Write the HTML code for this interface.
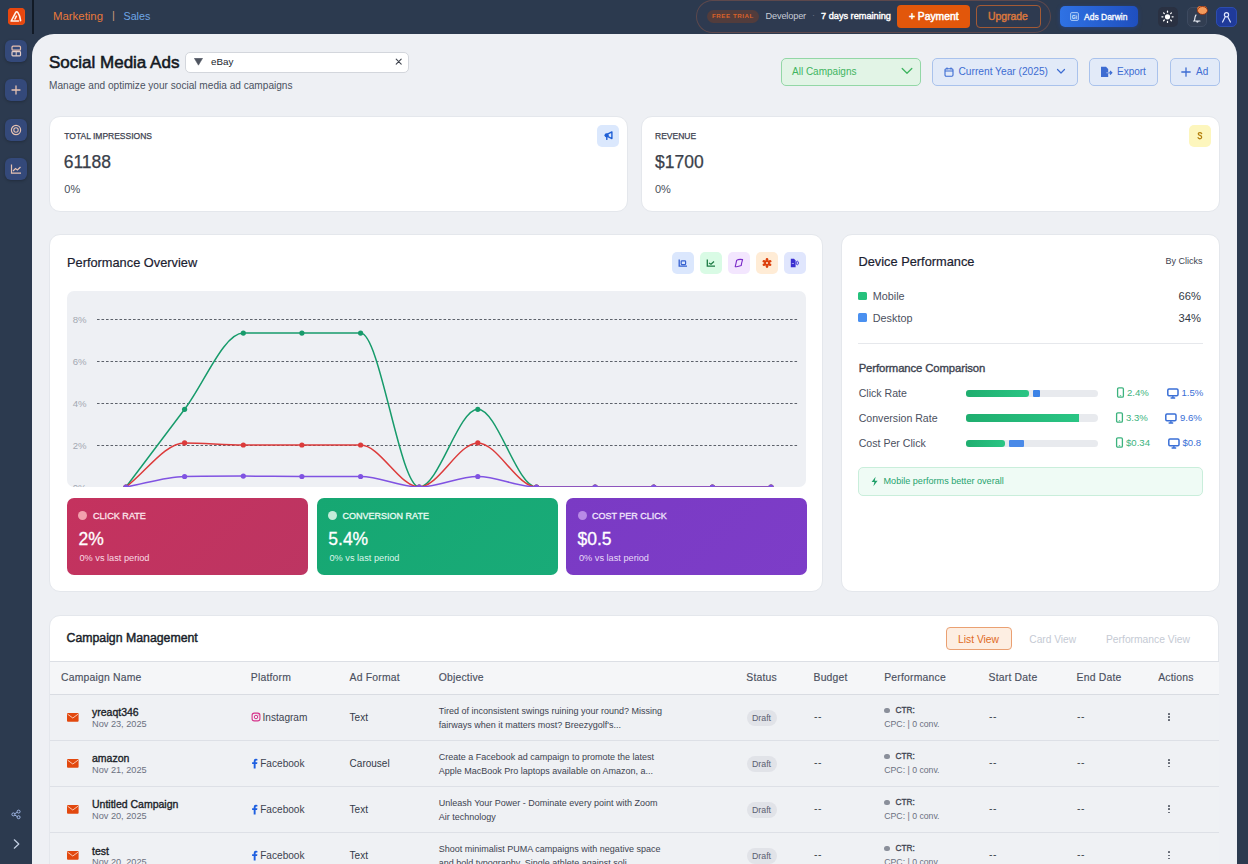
<!DOCTYPE html>
<html><head><meta charset="utf-8">
<style>
*{box-sizing:border-box;margin:0;padding:0}
html,body{width:1248px;height:864px;overflow:hidden}
body{background:#2c3a4f;font-family:"Liberation Sans",sans-serif;position:relative;color:#3d4350}
.a{position:absolute;white-space:nowrap}
.b{font-weight:700}
svg{display:block}
#main{position:absolute;left:32px;top:34px;width:1205px;height:900px;background:#eef0f4;border-radius:22px 22px 0 0}
.card{position:absolute;background:#fff;border:1px solid #e4e7ec;border-radius:11px}
.sbtn{position:absolute;left:5px;width:22px;height:22px;border-radius:6px;background:#34497a;box-shadow:0 1px 3px rgba(0,0,0,.25)}
.ib{position:absolute;width:22px;height:22px;border-radius:5px}
.tb{position:absolute;top:58px;height:27.5px;border-radius:5px;border:1px solid #a9c2ec;background:#e2eaf8;color:#3d6cd2;font-size:10px}
.mc{position:absolute;top:498px;height:77px;border-radius:7px;color:#fff}
.row{position:absolute;left:0;width:1170px;height:46.3px;border-top:1px solid #dfe2e8}
</style></head>
<body>
<!-- top header -->
<div class="a" style="left:32px;top:0;width:2px;height:34px;background:#121a26"></div>
<div class="a" style="left:8px;top:8px;width:17px;height:17px;border-radius:4px;background:#ea5a1c"></div>
<div class="a" style="left:53px;top:10.3px;font-size:11.4px;color:#e8793a">Marketing</div>
<div class="a" style="left:112px;top:9px;font-size:11px;color:#c79a78">|</div>
<div class="a" style="left:123.5px;top:10.3px;font-size:10.7px;color:#6fa6e6">Sales</div>

<!-- trial pill -->
<div class="a" style="left:696px;top:0px;width:355px;height:33px;border-radius:17px;border:1px solid rgba(214,110,70,0.28);background:#2e3a50"></div>
<div class="a" style="left:707px;top:10px;width:52px;height:12.5px;border-radius:7px;background:#523c3c"></div>
<div class="a b" style="left:712px;top:12.3px;font-size:6.2px;letter-spacing:0.55px;color:#d9622a">FREE TRIAL</div>
<div class="a" style="left:765.5px;top:11.2px;font-size:9.2px;color:#c7ccd6;letter-spacing:-0.15px">Developer</div>
<div class="a" style="left:812px;top:10px;font-size:9px;color:#6b7385">·</div>
<div class="a" style="left:821px;top:11.2px;font-size:9.2px;color:#fff;-webkit-text-stroke:0.4px #fff">7 days remaining</div>
<div class="a" style="left:897px;top:5px;width:73px;height:23px;border-radius:4px;background:#e2570b"></div>
<div class="a" style="left:909px;top:11.2px;font-size:10.3px;color:#fff;-webkit-text-stroke:0.5px #fff">+ Payment</div>
<div class="a" style="left:976px;top:5px;width:65px;height:23px;border-radius:4px;border:1.5px solid #a35a35"></div>
<div class="a" style="left:988px;top:11.2px;font-size:10.4px;color:#d9773d;-webkit-text-stroke:0.45px #d9773d">Upgrade</div>

<div class="a" style="left:1060px;top:6px;width:77.5px;height:21px;border-radius:5px;background:linear-gradient(90deg,#2f72e4,#1f4fbf);box-shadow:0 1px 4px rgba(30,80,200,.4)"></div>
<div class="a" style="left:1070px;top:11.5px;width:9px;height:9px;border-radius:2px;border:1px solid #9ec0f5;background:#3f7de0"></div>
<div class="a" style="left:1084px;top:11.5px;font-size:8.5px;color:#fff;-webkit-text-stroke:0.3px #fff">Ads Darwin</div>

<div class="a" style="left:1157.5px;top:6.5px;width:20px;height:20px;border-radius:5px;background:#2a3142"></div>
<div class="a" style="left:1186.5px;top:6.5px;width:20.5px;height:20px;border-radius:5px;background:#323e52;border:1px solid #3d4a60"></div>
<div class="a" style="left:1197px;top:6px;width:10px;height:7px;border-radius:4px;background:#f0823a"></div>
<div class="a" style="left:1216px;top:6.5px;width:21px;height:20.5px;border-radius:5px;background:#1f3a9a;border:1px solid #2d4db0"></div>

<!-- sidebar buttons -->
<div class="sbtn" style="top:40px"></div>
<div class="sbtn" style="top:79px"></div>
<div class="sbtn" style="top:118.5px"></div>
<div class="sbtn" style="top:158px"></div>


<!-- sidebar bottom -->
<svg class="a" style="left:10px;top:808px" width="12" height="12" viewBox="0 0 12 12"><g fill="none" stroke="#a9c1f0" stroke-width="0.9"><circle cx="3.4" cy="6.4" r="1.5"/><circle cx="8.6" cy="3.6" r="1.5"/><circle cx="8.6" cy="9.2" r="1.5"/><path d="M4.8,5.7 L7.2,4.3 M4.8,7.1 L7.2,8.5"/></g></svg>
<svg class="a" style="left:12px;top:838px" width="9" height="12" viewBox="0 0 9 12"><path d="M2.3,1.8 L6.8,6 L2.3,10.2" fill="none" stroke="#c4d0e4" stroke-width="1.2" stroke-linecap="round" stroke-linejoin="round"/></svg>

<!-- main panel -->
<div id="main"></div>

<div class="a" style="left:49px;top:53.3px;font-size:17px;-webkit-text-stroke:0.55px #14181f;color:#14181f">Social Media Ads</div>
<div class="a" style="left:184.8px;top:51.5px;width:224.6px;height:21px;border-radius:5px;border:1px solid #d3d6dc;background:#fff"></div>
<div class="a" style="left:211px;top:55.9px;font-size:9.8px;color:#20242c">eBay</div>
<div class="a" style="left:49px;top:80.3px;font-size:10.1px;color:#4b5261">Manage and optimize your social media ad campaigns</div>

<!-- toolbar -->
<div class="tb" style="left:780.5px;width:140px;background:#e2f4e6;border-color:#93d7a6;color:#3fb460"></div>
<div class="a" style="left:792px;top:66.4px;font-size:10px;color:#3fb460">All Campaigns</div>
<div class="tb" style="left:932px;width:145.5px"></div>
<div class="a" style="left:958.5px;top:66.4px;font-size:10.2px;color:#3d6cd2">Current Year (2025)</div>
<div class="tb" style="left:1089px;width:69px"></div>
<div class="a" style="left:1117px;top:66.4px;font-size:10px;color:#3d6cd2">Export</div>
<div class="tb" style="left:1169.5px;width:50.5px"></div>
<div class="a" style="left:1196px;top:66.4px;font-size:10px;color:#3d6cd2">Ad</div>

<!-- stat cards -->
<div class="card" style="left:49px;top:115.5px;width:579px;height:96px"></div>
<div class="a" style="left:64.3px;top:131.2px;font-size:8.5px;color:#3e4350;-webkit-text-stroke:0.25px #3e4350">TOTAL IMPRESSIONS</div>
<div class="a" style="left:63.7px;top:152px;font-size:17.5px;color:#3a3f4a;-webkit-text-stroke:0.25px #3a3f4a">61188</div>
<div class="ib" style="left:597.3px;top:124.7px;background:#dbe8fd"></div>
<div class="a" style="left:64.3px;top:183.2px;font-size:11px;color:#4a4f5a">0%</div>

<div class="card" style="left:641px;top:115.5px;width:579px;height:96px"></div>
<div class="a" style="left:655px;top:131.2px;font-size:8.5px;color:#3e4350;-webkit-text-stroke:0.25px #3e4350">REVENUE</div>
<div class="a" style="left:655px;top:152px;font-size:17.5px;color:#3a3f4a;-webkit-text-stroke:0.25px #3a3f4a">$1700</div>
<div class="ib" style="left:1188.5px;top:124.5px;background:#fdf6bd"></div>
<div class="a" style="left:655px;top:183.2px;font-size:11px;color:#4a4f5a">0%</div>

<!-- performance overview -->
<div class="card" style="left:49px;top:234px;width:774px;height:358px"></div>
<div class="a" style="left:67px;top:254.5px;font-size:12.8px;color:#1b2130;-webkit-text-stroke:0.2px #1b2130">Performance Overview</div>


<!-- chart -->
<div class="a" style="left:67px;top:291px;width:739px;height:196px;border-radius:7px;background:#eef0f4;overflow:hidden">
<svg width="739" height="210" style="position:absolute;left:0;top:0">
<line x1="30" y1="28.5" x2="731" y2="28.5" stroke="#5c616a" stroke-width="1" stroke-dasharray="2.6,1.9"/>
<text x="19.5" y="31.6" text-anchor="end" font-family="Liberation Sans" font-size="9.6" fill="#a3a8b2">8%</text>
<line x1="30" y1="70.5" x2="731" y2="70.5" stroke="#5c616a" stroke-width="1" stroke-dasharray="2.6,1.9"/>
<text x="19.5" y="73.6" text-anchor="end" font-family="Liberation Sans" font-size="9.6" fill="#a3a8b2">6%</text>
<line x1="30" y1="112.5" x2="731" y2="112.5" stroke="#5c616a" stroke-width="1" stroke-dasharray="2.6,1.9"/>
<text x="19.5" y="115.6" text-anchor="end" font-family="Liberation Sans" font-size="9.6" fill="#a3a8b2">4%</text>
<line x1="30" y1="154.5" x2="731" y2="154.5" stroke="#5c616a" stroke-width="1" stroke-dasharray="2.6,1.9"/>
<text x="19.5" y="157.6" text-anchor="end" font-family="Liberation Sans" font-size="9.6" fill="#a3a8b2">2%</text>
<line x1="30" y1="196.5" x2="731" y2="196.5" stroke="#5c616a" stroke-width="1" stroke-dasharray="2.6,1.9"/>
<text x="19.5" y="199.6" text-anchor="end" font-family="Liberation Sans" font-size="9.6" fill="#a3a8b2">0%</text>
<path d="M59.0,196.0 C78.5,170.1 98.1,144.0 117.6,118.3 C137.2,92.6 156.7,42.1 176.3,42.1 C195.8,42.1 215.4,42.1 234.9,42.1 C254.5,42.1 274.0,42.1 293.6,42.1 C313.1,42.1 332.7,196.0 352.2,196.0 C371.7,196.0 391.3,118.3 410.8,118.3 C430.4,118.3 449.9,196.0 469.5,196.0 C489.0,196.0 508.6,196.0 528.1,196.0 C547.7,196.0 567.2,196.0 586.8,196.0 C606.3,196.0 625.9,196.0 645.4,196.0 C664.9,196.0 684.5,196.0 704.0,196.0" fill="none" stroke="#179b6b" stroke-width="1.5"/>
<circle cx="59.0" cy="196.0" r="2.6" fill="#179b6b"/>
<circle cx="117.6" cy="118.3" r="2.6" fill="#179b6b"/>
<circle cx="176.3" cy="42.1" r="2.6" fill="#179b6b"/>
<circle cx="234.9" cy="42.1" r="2.6" fill="#179b6b"/>
<circle cx="293.6" cy="42.1" r="2.6" fill="#179b6b"/>
<circle cx="352.2" cy="196.0" r="2.6" fill="#179b6b"/>
<circle cx="410.8" cy="118.3" r="2.6" fill="#179b6b"/>
<circle cx="469.5" cy="196.0" r="2.6" fill="#179b6b"/>
<circle cx="528.1" cy="196.0" r="2.6" fill="#179b6b"/>
<circle cx="586.8" cy="196.0" r="2.6" fill="#179b6b"/>
<circle cx="645.4" cy="196.0" r="2.6" fill="#179b6b"/>
<circle cx="704.0" cy="196.0" r="2.6" fill="#179b6b"/>
<path d="M59.0,196.0 C78.5,181.3 98.1,151.9 117.6,151.9 C137.2,151.9 156.7,154.0 176.3,154.0 C195.8,154.0 215.4,154.0 234.9,154.0 C254.5,154.0 274.0,154.0 293.6,154.0 C313.1,154.0 332.7,196.0 352.2,196.0 C371.7,196.0 391.3,151.9 410.8,151.9 C430.4,151.9 449.9,196.0 469.5,196.0 C489.0,196.0 508.6,196.0 528.1,196.0 C547.7,196.0 567.2,196.0 586.8,196.0 C606.3,196.0 625.9,196.0 645.4,196.0 C664.9,196.0 684.5,196.0 704.0,196.0" fill="none" stroke="#dc3b3b" stroke-width="1.5"/>
<circle cx="59.0" cy="196.0" r="2.6" fill="#dc3b3b"/>
<circle cx="117.6" cy="151.9" r="2.6" fill="#dc3b3b"/>
<circle cx="176.3" cy="154.0" r="2.6" fill="#dc3b3b"/>
<circle cx="234.9" cy="154.0" r="2.6" fill="#dc3b3b"/>
<circle cx="293.6" cy="154.0" r="2.6" fill="#dc3b3b"/>
<circle cx="352.2" cy="196.0" r="2.6" fill="#dc3b3b"/>
<circle cx="410.8" cy="151.9" r="2.6" fill="#dc3b3b"/>
<circle cx="469.5" cy="196.0" r="2.6" fill="#dc3b3b"/>
<circle cx="528.1" cy="196.0" r="2.6" fill="#dc3b3b"/>
<circle cx="586.8" cy="196.0" r="2.6" fill="#dc3b3b"/>
<circle cx="645.4" cy="196.0" r="2.6" fill="#dc3b3b"/>
<circle cx="704.0" cy="196.0" r="2.6" fill="#dc3b3b"/>
<path d="M59.0,196.0 C78.5,192.5 98.1,185.9 117.6,185.5 C137.2,185.1 156.7,185.1 176.3,185.1 C195.8,185.1 215.4,185.5 234.9,185.5 C254.5,185.5 274.0,185.5 293.6,185.5 C313.1,185.5 332.7,196.0 352.2,196.0 C371.7,196.0 391.3,185.5 410.8,185.5 C430.4,185.5 449.9,196.0 469.5,196.0 C489.0,196.0 508.6,196.0 528.1,196.0 C547.7,196.0 567.2,196.0 586.8,196.0 C606.3,196.0 625.9,196.0 645.4,196.0 C664.9,196.0 684.5,196.0 704.0,196.0" fill="none" stroke="#8053e2" stroke-width="1.5"/>
<circle cx="59.0" cy="196.0" r="2.6" fill="#8053e2"/>
<circle cx="117.6" cy="185.5" r="2.6" fill="#8053e2"/>
<circle cx="176.3" cy="185.1" r="2.6" fill="#8053e2"/>
<circle cx="234.9" cy="185.5" r="2.6" fill="#8053e2"/>
<circle cx="293.6" cy="185.5" r="2.6" fill="#8053e2"/>
<circle cx="352.2" cy="196.0" r="2.6" fill="#8053e2"/>
<circle cx="410.8" cy="185.5" r="2.6" fill="#8053e2"/>
<circle cx="469.5" cy="196.0" r="2.6" fill="#8053e2"/>
<circle cx="528.1" cy="196.0" r="2.6" fill="#8053e2"/>
<circle cx="586.8" cy="196.0" r="2.6" fill="#8053e2"/>
<circle cx="645.4" cy="196.0" r="2.6" fill="#8053e2"/>
<circle cx="704.0" cy="196.0" r="2.6" fill="#8053e2"/>

</svg>
</div>
<!-- metric cards -->
<div class="mc" style="left:67px;width:241px;background:linear-gradient(135deg,#c4325e,#bd3562)"></div>
<div class="a" style="left:78.3px;top:511px;width:9px;height:9px;border-radius:50%;background:#f2a0ad"></div>
<div class="a" style="left:93px;top:510.8px;font-size:9.1px;color:#fde6ec;-webkit-text-stroke:0.3px #fde6ec">CLICK RATE</div>
<div class="a" style="left:78.5px;top:529.1px;font-size:17.5px;color:#fff;-webkit-text-stroke:0.3px #fff">2%</div>
<div class="a" style="left:79.5px;top:552.9px;font-size:9.2px;color:#fadbe4">0% vs last period</div>

<div class="mc" style="left:316.5px;width:241px;background:linear-gradient(135deg,#16a772,#19ab78)"></div>
<div class="a" style="left:328px;top:511px;width:9px;height:9px;border-radius:50%;background:#c3ecd9"></div>
<div class="a" style="left:342.6px;top:510.8px;font-size:9.0px;color:#e8fbf2;-webkit-text-stroke:0.3px #e8fbf2">CONVERSION RATE</div>
<div class="a" style="left:328.3px;top:529.1px;font-size:17.5px;color:#fff;-webkit-text-stroke:0.3px #fff">5.4%</div>
<div class="a" style="left:329.5px;top:552.9px;font-size:9.2px;color:#dcf6ea">0% vs last period</div>

<div class="mc" style="left:566px;width:240.5px;background:linear-gradient(135deg,#7a3ac4,#7d3dc8)"></div>
<div class="a" style="left:577.5px;top:511px;width:9px;height:9px;border-radius:50%;background:#b88ae6"></div>
<div class="a" style="left:592px;top:510.8px;font-size:9.0px;color:#f1e6fc;-webkit-text-stroke:0.3px #f1e6fc">COST PER CLICK</div>
<div class="a" style="left:577.5px;top:529.1px;font-size:17.5px;color:#fff;-webkit-text-stroke:0.3px #fff">$0.5</div>
<div class="a" style="left:579px;top:552.9px;font-size:9.2px;color:#e8d9f8">0% vs last period</div>

<!-- device performance -->
<div class="card" style="left:841px;top:234px;width:379px;height:358px"></div>
<div class="a" style="left:858.5px;top:253.6px;font-size:12.8px;color:#1b2130;-webkit-text-stroke:0.2px #1b2130">Device Performance</div>


<div class="a" style="left:1165.5px;top:256px;font-size:9px;color:#3d4350">By Clicks</div>
<div class="a" style="left:858.3px;top:292.2px;width:8.4px;height:8.2px;border-radius:1.5px;background:#25c17c"></div>
<div class="a" style="left:872.8px;top:290px;font-size:10.8px;color:#4b5060">Mobile</div>
<div class="a" style="left:1178.5px;top:290px;font-size:11.2px;color:#333844">66%</div>
<div class="a" style="left:858.3px;top:313.4px;width:8.4px;height:8.2px;border-radius:1.5px;background:#4a90f0"></div>
<div class="a" style="left:872.8px;top:312.2px;font-size:10.8px;color:#4b5060">Desktop</div>
<div class="a" style="left:1178.5px;top:312.2px;font-size:11.2px;color:#333844">34%</div>
<div class="a" style="left:858px;top:342.5px;width:345px;height:1px;background:#e6e8ec"></div>
<div class="a" style="left:858.7px;top:362px;font-size:11.3px;letter-spacing:-0.1px;-webkit-text-stroke:0.35px #3d4350;color:#3d4350">Performance Comparison</div>

<div class="a" style="left:858.7px;top:386.5px;font-size:10.6px;color:#4b5060">Click Rate</div>
<div class="a" style="left:966.3px;top:389.5px;width:131.5px;height:7.3px;border-radius:4px;background:#e8eaee"></div>
<div class="a" style="left:966.3px;top:389.5px;width:63px;height:7.3px;border-radius:2px 0 0 2px;border-radius:3px;background:linear-gradient(90deg,#1fae6f,#2ac584)"></div>
<div class="a" style="left:1033px;top:389.5px;width:6.8px;height:7.3px;border-radius:1px;background:#3b82e6"></div>
<div class="a" style="left:858.7px;top:411.9px;font-size:10.6px;color:#4b5060">Conversion Rate</div>
<div class="a" style="left:966.3px;top:414.4px;width:131.5px;height:7.4px;border-radius:4px;background:#e8eaee"></div>
<div class="a" style="left:966.3px;top:414.4px;width:112.8px;height:7.4px;border-radius:3px 0 0 3px;background:linear-gradient(90deg,#1fae6f,#2ac584)"></div>
<div class="a" style="left:858.7px;top:437.2px;font-size:10.6px;color:#4b5060">Cost Per Click</div>
<div class="a" style="left:966.3px;top:439.6px;width:131.5px;height:7.3px;border-radius:4px;background:#e8eaee"></div>
<div class="a" style="left:966.3px;top:439.6px;width:38.6px;height:7.3px;border-radius:3px;background:linear-gradient(90deg,#1fae6f,#2ac584)"></div>
<div class="a" style="left:1009px;top:439.6px;width:15px;height:7.3px;border-radius:1px;background:#4a8ae8"></div>

<div class="a" style="left:1127px;top:387.3px;font-size:9.6px;color:#3cb37e">2.4%</div>
<div class="a" style="left:1181.5px;top:387.3px;font-size:9.6px;color:#3a6fd6">1.5%</div>
<div class="a" style="left:1126px;top:412.3px;font-size:9.6px;color:#3cb37e">3.3%</div>
<div class="a" style="left:1180px;top:412.3px;font-size:9.6px;color:#3a6fd6">9.6%</div>
<div class="a" style="left:1126px;top:437.3px;font-size:9.6px;color:#3cb37e">$0.34</div>
<div class="a" style="left:1182.5px;top:437.3px;font-size:9.6px;color:#3a6fd6">$0.8</div>

<div class="a" style="left:858.2px;top:466.7px;width:344.4px;height:29.3px;border-radius:5px;background:#effbf5;border:1px solid #c9eedb"></div>
<div class="a" style="left:883.5px;top:476px;font-size:9.1px;color:#26a36e">Mobile performs better overall</div>


<!-- ICONS -->
<svg class="a" style="left:8px;top:8px" width="17" height="17" viewBox="0 0 17 17"><rect x="0" y="0" width="16.5" height="16.5" rx="3.5" fill="#e8470f"/><path d="M3.2,13 L7.6,4.6 Q8.6,3 9.8,4.4 Q12,7.5 12.6,12.6 M3.2,13 L10.5,13 M8.4,8.2 L7,11" fill="none" stroke="#fff3ea" stroke-width="1.6" stroke-linecap="round" stroke-linejoin="round"/></svg>

<svg class="a" style="left:5px;top:40px" width="22" height="22" viewBox="0 0 22 22"><rect x="7" y="6.2" width="8.5" height="4" rx="1" fill="none" stroke="#e9c0ae" stroke-width="1.2"/><rect x="7" y="11.6" width="8.5" height="4.2" rx="0.8" fill="none" stroke="#e6cfc8" stroke-width="1.2"/><path d="M11.2,11.6 V15.8" stroke="#e6cfc8" stroke-width="1"/></svg>
<svg class="a" style="left:5px;top:79px" width="22" height="22" viewBox="0 0 22 22"><path d="M11,7 V15 M7,11 H15" stroke="#e6c2b2" stroke-width="1.3" stroke-linecap="round"/></svg>
<svg class="a" style="left:5px;top:118.5px" width="22" height="22" viewBox="0 0 22 22"><circle cx="11" cy="11" r="4.6" fill="none" stroke="#e6c2b2" stroke-width="1.2"/><circle cx="11" cy="11" r="2.2" fill="none" stroke="#e6c2b2" stroke-width="1.1"/></svg>
<svg class="a" style="left:5px;top:158px" width="22" height="22" viewBox="0 0 22 22"><path d="M6.5,6.5 V15.2 H16" fill="none" stroke="#e6c2b2" stroke-width="1.2"/><path d="M8,13 L10.5,10.6 L12.4,12 L15.5,9" fill="none" stroke="#e6c2b2" stroke-width="1.2"/></svg>

<!-- header icons -->
<svg class="a" style="left:1157.5px;top:6.5px" width="20" height="20" viewBox="0 0 20 20"><circle cx="9.5" cy="9.8" r="2.6" fill="#fff"/><g stroke="#fff" stroke-width="1.3" stroke-linecap="round"><path d="M9.5,4.2 V5.2 M9.5,14.4 V15.4 M3.9,9.8 H4.9 M14.1,9.8 H15.1 M5.6,5.9 L6.3,6.6 M12.7,13 L13.4,13.7 M5.6,13.7 L6.3,13 M12.7,6.6 L13.4,5.9"/></g></svg>
<svg class="a" style="left:1186.5px;top:6.5px" width="21" height="20" viewBox="0 0 21 20"><path d="M7.5,13.5 Q8,9 9,8 M6.5,14 H13 M9.8,14.8 Q10.3,15.8 11,14.8" fill="none" stroke="#e6eaf2" stroke-width="1.1" stroke-linecap="round"/></svg>
<svg class="a" style="left:1197px;top:6px" width="11" height="9" viewBox="0 0 11 9"><ellipse cx="5.5" cy="4.5" rx="5" ry="4" fill="#f39a5b" stroke="#8a2a10" stroke-width="0.9"/></svg>
<svg class="a" style="left:1216px;top:6.5px" width="21" height="21" viewBox="0 0 21 21"><circle cx="10.5" cy="7.8" r="2.1" fill="none" stroke="#dfe6ff" stroke-width="1.2"/><path d="M6.6,15 L9,10.3 M14.4,15 L12,10.3" stroke="#dfe6ff" stroke-width="1.2" stroke-linecap="round"/></svg>
<svg class="a" style="left:1070px;top:11.5px" width="9" height="9" viewBox="0 0 9 9"><text x="4.5" y="6.6" text-anchor="middle" font-family="Liberation Sans" font-size="5" font-weight="700" fill="#dbe8ff">Gi</text></svg>

<!-- filter input icons -->
<svg class="a" style="left:193.5px;top:57.8px" width="9" height="8" viewBox="0 0 9 8"><path d="M0.3,0.3 H8.6 L4.45,7.2 Z" fill="#4f5560" stroke="#4f5560" stroke-width="0.5" stroke-linejoin="round"/></svg>
<svg class="a" style="left:394.5px;top:58px" width="8" height="8" viewBox="0 0 8 8"><path d="M1.2,1.2 L6.2,6.2 M6.2,1.2 L1.2,6.2" stroke="#3f444e" stroke-width="1.1" stroke-linecap="round"/></svg>

<!-- toolbar icons -->
<svg class="a" style="left:901px;top:67px" width="12" height="8" viewBox="0 0 12 8"><path d="M1.2,1.5 L6,6.2 L10.8,1.5" fill="none" stroke="#3fb460" stroke-width="1.3" stroke-linecap="round" stroke-linejoin="round"/></svg>
<svg class="a" style="left:943.5px;top:66.5px" width="10" height="10" viewBox="0 0 10 10"><rect x="1" y="1.8" width="8" height="7.4" rx="1.2" fill="none" stroke="#3d6cd2" stroke-width="1.1"/><path d="M1,4 H9 M3,0.6 V2.6 M7,0.6 V2.6" stroke="#3d6cd2" stroke-width="1.1"/></svg>
<svg class="a" style="left:1056px;top:68px" width="10" height="7" viewBox="0 0 10 7"><path d="M1.5,1.5 L5,5 L8.5,1.5" fill="none" stroke="#3d6cd2" stroke-width="1.2" stroke-linecap="round" stroke-linejoin="round"/></svg>
<svg class="a" style="left:1099.5px;top:65.5px" width="13" height="12" viewBox="0 0 13 12"><path d="M1,0.8 H6 L8.2,3 V11 H1 Z" fill="#3d6cd2"/><path d="M6.5,6.8 H11.8 M10,5 L11.8,6.8 L10,8.6" fill="none" stroke="#3d6cd2" stroke-width="1.2"/><path d="M6.3,6.8 H9" stroke="#e2eaf8" stroke-width="0.6"/></svg>
<svg class="a" style="left:1181px;top:66.5px" width="10" height="10" viewBox="0 0 10 10"><path d="M5,0.8 V9.2 M0.8,5 H9.2" stroke="#3d6cd2" stroke-width="1.3" stroke-linecap="round"/></svg>

<!-- stat card icons -->
<svg class="a" style="left:597.5px;top:125px" width="22" height="22" viewBox="0 0 22 22"><g fill="none" stroke="#1f5fd6" stroke-width="1.4" stroke-linecap="round" stroke-linejoin="round"><path d="M9,9.4 L13.9,6.9 V13.6 L9,11.2"/><path d="M8.8,11.3 V14.4"/></g><circle cx="8.6" cy="10.3" r="2.1" fill="#1f5fd6"/></svg>
<svg class="a" style="left:1188.5px;top:124.5px" width="22" height="22" viewBox="0 0 22 22"><g transform="translate(11,10.7) scale(0.84) translate(-11,-11)"><path d="M13,8.4 Q12.2,7.2 10.8,7.3 Q8.9,7.4 9,8.9 Q9.1,10.1 11,10.6 Q13.1,11.2 13,12.8 Q12.8,14.6 10.9,14.6 Q9.3,14.6 8.8,13.4" fill="none" stroke="#b5800f" stroke-width="1.55" stroke-linecap="round"/></g></svg>

<!-- chart tool buttons -->
<div class="ib" style="left:672px;top:251.5px;background:#dbe7fd"></div>
<div class="ib" style="left:700px;top:251.5px;background:#d9fbe5"></div>
<div class="ib" style="left:728px;top:251.5px;background:#f3e6fe"></div>
<div class="ib" style="left:756px;top:251.5px;background:#ffecd6"></div>
<div class="ib" style="left:784px;top:251.5px;background:#e0e6fd"></div>
<svg class="a" style="left:672px;top:251.5px" width="22" height="22" viewBox="0 0 22 22"><path d="M7.2,7.4 V14.2 H15" fill="none" stroke="#3560d0" stroke-width="1.3"/><rect x="9.2" y="8.8" width="4.4" height="3.8" rx="0.8" fill="none" stroke="#3560d0" stroke-width="1.2"/></svg>
<svg class="a" style="left:700px;top:251.5px" width="22" height="22" viewBox="0 0 22 22"><path d="M7.3,7.4 V14.2 H15" fill="none" stroke="#1c7a44" stroke-width="1.3"/><path d="M9,11 L11,12.2 L14,9.6" fill="none" stroke="#1c7a44" stroke-width="1.3"/></svg>
<svg class="a" style="left:728px;top:251.5px" width="22" height="22" viewBox="0 0 22 22"><path d="M8.6,8.4 Q10.5,7 14.6,7.6 Q13.5,11 13.2,13.6 Q10,15 7.2,14.6 Q8.2,11 8.6,8.4 Z" fill="none" stroke="#7b2bc8" stroke-width="1.1" stroke-linejoin="round"/></svg>
<svg class="a" style="left:756px;top:251.5px" width="22" height="22" viewBox="0 0 22 22"><g fill="#dc3f0c"><circle cx="11" cy="11" r="3"/><circle cx="11" cy="7.4" r="1.3"/><circle cx="11" cy="14.6" r="1.3"/><circle cx="7.9" cy="9.2" r="1.3"/><circle cx="14.1" cy="9.2" r="1.3"/><circle cx="7.9" cy="12.8" r="1.3"/><circle cx="14.1" cy="12.8" r="1.3"/></g><circle cx="11" cy="11" r="1" fill="#ffecd6"/></svg>
<svg class="a" style="left:784px;top:251.5px" width="22" height="22" viewBox="0 0 22 22"><path d="M6.8,6.8 H10 L11.6,8.4 V15.2 H6.8 Z" fill="#3a2fd0"/><path d="M7.8,11.5 H10" stroke="#e0e6fd" stroke-width="0.6"/><ellipse cx="13.3" cy="11" rx="1.1" ry="1.8" fill="none" stroke="#3a2fd0" stroke-width="0.9"/></svg>


<!-- device icons -->
<svg class="a" style="left:1115.8px;top:387.3px" width="9" height="11" viewBox="0 0 9 11"><rect x="1.6" y="0.8" width="5.8" height="9.4" rx="1.2" fill="none" stroke="#3cb37e" stroke-width="1.3"/><path d="M3.8,8.6 H5.2" stroke="#3cb37e" stroke-width="0.8"/></svg>
<svg class="a" style="left:1166.5px;top:387.5px" width="12" height="11" viewBox="0 0 12 11"><rect x="0.8" y="1" width="10.2" height="6.8" rx="1.2" fill="none" stroke="#3a6fd6" stroke-width="1.5"/><path d="M3.6,10 H8.2 M5.9,8 V10" stroke="#3a6fd6" stroke-width="1.3"/></svg>
<svg class="a" style="left:1114.6px;top:412.3px" width="9" height="11" viewBox="0 0 9 11"><rect x="1.6" y="0.8" width="5.8" height="9.4" rx="1.2" fill="none" stroke="#3cb37e" stroke-width="1.3"/><path d="M3.8,8.6 H5.2" stroke="#3cb37e" stroke-width="0.8"/></svg>
<svg class="a" style="left:1164.8px;top:412.5px" width="12" height="11" viewBox="0 0 12 11"><rect x="0.8" y="1" width="10.2" height="6.8" rx="1.2" fill="none" stroke="#3a6fd6" stroke-width="1.5"/><path d="M3.6,10 H8.2 M5.9,8 V10" stroke="#3a6fd6" stroke-width="1.3"/></svg>
<svg class="a" style="left:1114.6px;top:437.3px" width="9" height="11" viewBox="0 0 9 11"><rect x="1.6" y="0.8" width="5.8" height="9.4" rx="1.2" fill="none" stroke="#3cb37e" stroke-width="1.3"/><path d="M3.8,8.6 H5.2" stroke="#3cb37e" stroke-width="0.8"/></svg>
<svg class="a" style="left:1167.5px;top:437.5px" width="12" height="11" viewBox="0 0 12 11"><rect x="0.8" y="1" width="10.2" height="6.8" rx="1.2" fill="none" stroke="#3a6fd6" stroke-width="1.5"/><path d="M3.6,10 H8.2 M5.9,8 V10" stroke="#3a6fd6" stroke-width="1.3"/></svg>
<svg class="a" style="left:869.5px;top:475.5px" width="9" height="11" viewBox="0 0 9 11"><path d="M5.6,0.8 L1.6,6 H4.4 L3.4,10.2 L7.6,4.8 H4.8 Z" fill="#22a06b"/></svg>

<!-- campaign management -->
<div class="card" style="left:49px;top:615px;width:1170px;height:300px"></div>
<div class="a" style="left:66.5px;top:631.3px;font-size:12.3px;-webkit-text-stroke:0.45px #1a1f2b;color:#1a1f2b">Campaign Management</div>


<!-- view toggles -->
<div class="a" style="left:946px;top:627.2px;width:65.7px;height:22.4px;border-radius:4px;background:#fdeee2;border:1px solid #eaa072"></div>
<div class="a" style="left:958px;top:633.5px;font-size:10.3px;color:#e06a24">List View</div>
<div class="a" style="left:1029.3px;top:633.5px;font-size:10.2px;color:#c5cad4">Card View</div>
<div class="a" style="left:1106px;top:633.5px;font-size:10.3px;color:#c5cad4">Performance View</div>

<!-- table -->
<div class="a" style="left:50px;top:661px;width:1169px;height:33.5px;background:#f5f6f8;border-top:1px solid #dcdfe5;border-bottom:1px solid #d9dce2"></div>
<div class="a" style="left:50px;top:694.5px;width:1169px;height:200px;background:#eff1f4"></div>
<div class="a" style="left:61px;top:672.3px;font-size:10.4px;letter-spacing:0.2px;color:#4b5060;-webkit-text-stroke:0.15px #4b5060">Campaign Name</div>
<div class="a" style="left:250.8px;top:672.3px;font-size:10.4px;letter-spacing:0.2px;color:#4b5060;-webkit-text-stroke:0.15px #4b5060">Platform</div>
<div class="a" style="left:349.6px;top:672.3px;font-size:10.4px;letter-spacing:0.2px;color:#4b5060;-webkit-text-stroke:0.15px #4b5060">Ad Format</div>
<div class="a" style="left:438.7px;top:672.3px;font-size:10.4px;letter-spacing:0.2px;color:#4b5060;-webkit-text-stroke:0.15px #4b5060">Objective</div>
<div class="a" style="left:746.3px;top:672.3px;font-size:10.4px;letter-spacing:0.2px;color:#4b5060;-webkit-text-stroke:0.15px #4b5060">Status</div>
<div class="a" style="left:813.5px;top:672.3px;font-size:10.4px;letter-spacing:0.2px;color:#4b5060;-webkit-text-stroke:0.15px #4b5060">Budget</div>
<div class="a" style="left:884.2px;top:672.3px;font-size:10.4px;letter-spacing:0.2px;color:#4b5060;-webkit-text-stroke:0.15px #4b5060">Performance</div>
<div class="a" style="left:988.6px;top:672.3px;font-size:10.4px;letter-spacing:0.2px;color:#4b5060;-webkit-text-stroke:0.15px #4b5060">Start Date</div>
<div class="a" style="left:1076.6px;top:672.3px;font-size:10.4px;letter-spacing:0.2px;color:#4b5060;-webkit-text-stroke:0.15px #4b5060">End Date</div>
<div class="a" style="left:1158.2px;top:672.3px;font-size:10.4px;letter-spacing:0.2px;color:#4b5060;-webkit-text-stroke:0.15px #4b5060">Actions</div>
<svg class="a" style="left:66.5px;top:712.5px" width="12" height="9" viewBox="0 0 12 9"><rect x="0" y="0" width="11.6" height="8.8" rx="1" fill="#e2480e"/><path d="M0.6,1.2 L5.8,5 L11,1.2" fill="none" stroke="#fbd5c3" stroke-width="0.9"/></svg>
<div class="a" style="left:92px;top:706.2px;font-size:10.5px;color:#1b1f29;-webkit-text-stroke:0.35px #1b1f29">yreaqt346</div>
<div class="a" style="left:92px;top:718.6px;font-size:9.2px;color:#6b7080">Nov 23, 2025</div>
<svg class="a" style="left:250.8px;top:712.0px" width="10" height="10" viewBox="0 0 10 10"><rect x="1.1" y="1.1" width="7.8" height="7.8" rx="2.2" fill="none" stroke="#d6338a" stroke-width="1.1"/><circle cx="5" cy="5" r="1.75" fill="none" stroke="#d6338a" stroke-width="1"/><circle cx="7.1" cy="2.9" r="0.5" fill="#d6338a"/></svg>
<div class="a" style="left:262.5px;top:712.1px;font-size:10.1px;color:#3d4350">Instagram</div>
<div class="a" style="left:349.6px;top:712.1px;font-size:10px;color:#333a48">Text</div>
<div class="a" style="left:438.8px;top:705.9px;font-size:9.0px;color:#3d4350">Tired of inconsistent swings ruining your round? Missing</div>
<div class="a" style="left:438.8px;top:719.9px;font-size:9.0px;color:#3d4350">fairways when it matters most? Breezygolf's...</div>
<div class="a" style="left:746.9px;top:710.1px;width:30.3px;height:15.6px;border-radius:8px;background:#e1e3e8"></div>
<div class="a" style="left:752px;top:712.5px;font-size:8.8px;color:#5b6070">Draft</div>
<div class="a" style="left:814px;top:710.5px;font-size:10.4px;letter-spacing:0.6px;color:#3a3f4a">--</div>
<div class="a" style="left:884.3px;top:707.6px;width:5.4px;height:5.4px;border-radius:50%;background:#8a8f9a"></div>
<div class="a" style="left:895.5px;top:705.1px;font-size:8.3px;color:#3d4350;-webkit-text-stroke:0.3px #3d4350">CTR:</div>
<div class="a" style="left:884.3px;top:719.1px;font-size:8.7px;color:#6b7080">CPC: | 0 conv.</div>
<div class="a" style="left:989px;top:710.5px;font-size:10.4px;letter-spacing:0.6px;color:#3a3f4a">--</div>
<div class="a" style="left:1077px;top:710.5px;font-size:10.4px;letter-spacing:0.6px;color:#3a3f4a">--</div>
<div class="a" style="left:1168.3px;top:713.0px;width:1.7px;height:1.7px;border-radius:50%;background:#5a5f6a"></div>
<div class="a" style="left:1168.3px;top:716.2px;width:1.7px;height:1.7px;border-radius:50%;background:#5a5f6a"></div>
<div class="a" style="left:1168.3px;top:719.4px;width:1.7px;height:1.7px;border-radius:50%;background:#5a5f6a"></div>
<div class="a" style="left:50px;top:740.1px;width:1169px;height:1px;background:#dde0e6"></div>
<svg class="a" style="left:66.5px;top:758.6px" width="12" height="9" viewBox="0 0 12 9"><rect x="0" y="0" width="11.6" height="8.8" rx="1" fill="#e2480e"/><path d="M0.6,1.2 L5.8,5 L11,1.2" fill="none" stroke="#fbd5c3" stroke-width="0.9"/></svg>
<div class="a" style="left:92px;top:752.3px;font-size:10.5px;color:#1b1f29;-webkit-text-stroke:0.35px #1b1f29">amazon</div>
<div class="a" style="left:92px;top:764.7px;font-size:9.2px;color:#6b7080">Nov 21, 2025</div>
<svg class="a" style="left:250.6px;top:758.1px" width="7" height="11" viewBox="0 0 7 11"><path d="M4.6,10.6 V6 H6.1 L6.4,4.3 H4.6 V3.2 Q4.6,2.4 5.5,2.4 H6.4 V0.9 Q5.6,0.7 4.9,0.7 Q2.7,0.7 2.7,3 V4.3 H1.1 V6 H2.7 V10.6 Z" fill="#1d5fe0"/></svg>
<div class="a" style="left:260.2px;top:758.2px;font-size:10.1px;color:#3d4350">Facebook</div>
<div class="a" style="left:349.6px;top:758.2px;font-size:10px;color:#333a48">Carousel</div>
<div class="a" style="left:438.8px;top:752.0px;font-size:9.0px;color:#3d4350">Create a Facebook ad campaign to promote the latest</div>
<div class="a" style="left:438.8px;top:766.0px;font-size:9.0px;color:#3d4350">Apple MacBook Pro laptops available on Amazon, a...</div>
<div class="a" style="left:746.9px;top:756.2px;width:30.3px;height:15.6px;border-radius:8px;background:#e1e3e8"></div>
<div class="a" style="left:752px;top:758.6px;font-size:8.8px;color:#5b6070">Draft</div>
<div class="a" style="left:814px;top:756.6px;font-size:10.4px;letter-spacing:0.6px;color:#3a3f4a">--</div>
<div class="a" style="left:884.3px;top:753.7px;width:5.4px;height:5.4px;border-radius:50%;background:#8a8f9a"></div>
<div class="a" style="left:895.5px;top:751.2px;font-size:8.3px;color:#3d4350;-webkit-text-stroke:0.3px #3d4350">CTR:</div>
<div class="a" style="left:884.3px;top:765.2px;font-size:8.7px;color:#6b7080">CPC: | 0 conv.</div>
<div class="a" style="left:989px;top:756.6px;font-size:10.4px;letter-spacing:0.6px;color:#3a3f4a">--</div>
<div class="a" style="left:1077px;top:756.6px;font-size:10.4px;letter-spacing:0.6px;color:#3a3f4a">--</div>
<div class="a" style="left:1168.3px;top:759.1px;width:1.7px;height:1.7px;border-radius:50%;background:#5a5f6a"></div>
<div class="a" style="left:1168.3px;top:762.3px;width:1.7px;height:1.7px;border-radius:50%;background:#5a5f6a"></div>
<div class="a" style="left:1168.3px;top:765.5px;width:1.7px;height:1.7px;border-radius:50%;background:#5a5f6a"></div>
<div class="a" style="left:50px;top:786.2px;width:1169px;height:1px;background:#dde0e6"></div>
<svg class="a" style="left:66.5px;top:804.7px" width="12" height="9" viewBox="0 0 12 9"><rect x="0" y="0" width="11.6" height="8.8" rx="1" fill="#e2480e"/><path d="M0.6,1.2 L5.8,5 L11,1.2" fill="none" stroke="#fbd5c3" stroke-width="0.9"/></svg>
<div class="a" style="left:92px;top:798.4px;font-size:10.5px;color:#1b1f29;-webkit-text-stroke:0.35px #1b1f29">Untitled Campaign</div>
<div class="a" style="left:92px;top:810.8px;font-size:9.2px;color:#6b7080">Nov 20, 2025</div>
<svg class="a" style="left:250.6px;top:804.2px" width="7" height="11" viewBox="0 0 7 11"><path d="M4.6,10.6 V6 H6.1 L6.4,4.3 H4.6 V3.2 Q4.6,2.4 5.5,2.4 H6.4 V0.9 Q5.6,0.7 4.9,0.7 Q2.7,0.7 2.7,3 V4.3 H1.1 V6 H2.7 V10.6 Z" fill="#1d5fe0"/></svg>
<div class="a" style="left:260.2px;top:804.3px;font-size:10.1px;color:#3d4350">Facebook</div>
<div class="a" style="left:349.6px;top:804.3px;font-size:10px;color:#333a48">Text</div>
<div class="a" style="left:438.8px;top:798.1px;font-size:9.0px;color:#3d4350">Unleash Your Power - Dominate every point with Zoom</div>
<div class="a" style="left:438.8px;top:812.1px;font-size:9.0px;color:#3d4350">Air technology</div>
<div class="a" style="left:746.9px;top:802.3px;width:30.3px;height:15.6px;border-radius:8px;background:#e1e3e8"></div>
<div class="a" style="left:752px;top:804.7px;font-size:8.8px;color:#5b6070">Draft</div>
<div class="a" style="left:814px;top:802.7px;font-size:10.4px;letter-spacing:0.6px;color:#3a3f4a">--</div>
<div class="a" style="left:884.3px;top:799.8px;width:5.4px;height:5.4px;border-radius:50%;background:#8a8f9a"></div>
<div class="a" style="left:895.5px;top:797.3px;font-size:8.3px;color:#3d4350;-webkit-text-stroke:0.3px #3d4350">CTR:</div>
<div class="a" style="left:884.3px;top:811.3px;font-size:8.7px;color:#6b7080">CPC: | 0 conv.</div>
<div class="a" style="left:989px;top:802.7px;font-size:10.4px;letter-spacing:0.6px;color:#3a3f4a">--</div>
<div class="a" style="left:1077px;top:802.7px;font-size:10.4px;letter-spacing:0.6px;color:#3a3f4a">--</div>
<div class="a" style="left:1168.3px;top:805.2px;width:1.7px;height:1.7px;border-radius:50%;background:#5a5f6a"></div>
<div class="a" style="left:1168.3px;top:808.4px;width:1.7px;height:1.7px;border-radius:50%;background:#5a5f6a"></div>
<div class="a" style="left:1168.3px;top:811.6px;width:1.7px;height:1.7px;border-radius:50%;background:#5a5f6a"></div>
<div class="a" style="left:50px;top:832.3px;width:1169px;height:1px;background:#dde0e6"></div>
<svg class="a" style="left:66.5px;top:850.8px" width="12" height="9" viewBox="0 0 12 9"><rect x="0" y="0" width="11.6" height="8.8" rx="1" fill="#e2480e"/><path d="M0.6,1.2 L5.8,5 L11,1.2" fill="none" stroke="#fbd5c3" stroke-width="0.9"/></svg>
<div class="a" style="left:92px;top:844.5px;font-size:10.5px;color:#1b1f29;-webkit-text-stroke:0.35px #1b1f29">test</div>
<div class="a" style="left:92px;top:856.9px;font-size:9.2px;color:#6b7080">Nov 20, 2025</div>
<svg class="a" style="left:250.6px;top:850.3px" width="7" height="11" viewBox="0 0 7 11"><path d="M4.6,10.6 V6 H6.1 L6.4,4.3 H4.6 V3.2 Q4.6,2.4 5.5,2.4 H6.4 V0.9 Q5.6,0.7 4.9,0.7 Q2.7,0.7 2.7,3 V4.3 H1.1 V6 H2.7 V10.6 Z" fill="#1d5fe0"/></svg>
<div class="a" style="left:260.2px;top:850.4px;font-size:10.1px;color:#3d4350">Facebook</div>
<div class="a" style="left:349.6px;top:850.4px;font-size:10px;color:#333a48">Text</div>
<div class="a" style="left:438.8px;top:844.2px;font-size:9.0px;color:#3d4350">Shoot minimalist PUMA campaigns with negative space</div>
<div class="a" style="left:438.8px;top:858.2px;font-size:9.0px;color:#3d4350">and bold typography. Single athlete against soli...</div>
<div class="a" style="left:746.9px;top:848.4px;width:30.3px;height:15.6px;border-radius:8px;background:#e1e3e8"></div>
<div class="a" style="left:752px;top:850.8px;font-size:8.8px;color:#5b6070">Draft</div>
<div class="a" style="left:814px;top:848.8px;font-size:10.4px;letter-spacing:0.6px;color:#3a3f4a">--</div>
<div class="a" style="left:884.3px;top:845.9px;width:5.4px;height:5.4px;border-radius:50%;background:#8a8f9a"></div>
<div class="a" style="left:895.5px;top:843.4px;font-size:8.3px;color:#3d4350;-webkit-text-stroke:0.3px #3d4350">CTR:</div>
<div class="a" style="left:884.3px;top:857.4px;font-size:8.7px;color:#6b7080">CPC: | 0 conv.</div>
<div class="a" style="left:989px;top:848.8px;font-size:10.4px;letter-spacing:0.6px;color:#3a3f4a">--</div>
<div class="a" style="left:1077px;top:848.8px;font-size:10.4px;letter-spacing:0.6px;color:#3a3f4a">--</div>
<div class="a" style="left:1168.3px;top:851.3px;width:1.7px;height:1.7px;border-radius:50%;background:#5a5f6a"></div>
<div class="a" style="left:1168.3px;top:854.5px;width:1.7px;height:1.7px;border-radius:50%;background:#5a5f6a"></div>
<div class="a" style="left:1168.3px;top:857.7px;width:1.7px;height:1.7px;border-radius:50%;background:#5a5f6a"></div>
</body></html>
